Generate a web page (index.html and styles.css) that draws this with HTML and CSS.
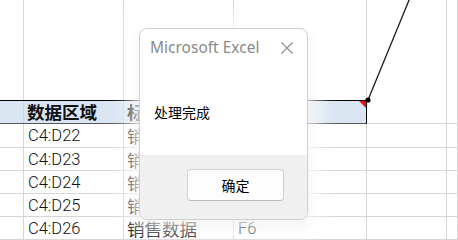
FILE: index.html
```html
<!DOCTYPE html>
<html lang="zh-CN">
<head>
    <meta charset="UTF-8">
    <title>Microsoft Excel</title>
    <link rel="stylesheet" href="styles.css">
</head>
<body>
    <div class="sheet">
        <!-- top area -->
        <div class="cell top"></div>
        <div class="cell top"></div>
        <div class="cell top"></div>
        <div class="cell top"></div>
        <div class="cell top"></div>
        <div class="cell top last"></div>

        <!-- header row -->
        <div class="cell head"></div>
        <div class="cell head"><span class="cjk bold">数据区域</span></div>
        <div class="cell head"><span class="cjk bold">标题</span></div>
        <div class="cell head"></div>
        <div class="cell"></div>
        <div class="cell last"></div>

        <div class="cell"></div><div class="cell">C4:D22</div><div class="cell"><span class="cjk">销售数据</span></div><div class="cell">F2</div><div class="cell"></div><div class="cell last"></div>
        <div class="cell"></div><div class="cell">C4:D23</div><div class="cell"><span class="cjk">销售数据</span></div><div class="cell">F3</div><div class="cell"></div><div class="cell last"></div>
        <div class="cell"></div><div class="cell">C4:D24</div><div class="cell"><span class="cjk">销售数据</span></div><div class="cell">F4</div><div class="cell"></div><div class="cell last"></div>
        <div class="cell"></div><div class="cell">C4:D25</div><div class="cell"><span class="cjk">销售数据</span></div><div class="cell">F5</div><div class="cell"></div><div class="cell last"></div>
        <div class="cell"></div><div class="cell">C4:D26</div><div class="cell"><span class="cjk">销售数据</span></div><div class="cell">F6</div><div class="cell"></div><div class="cell last"></div>
    </div>

    <!-- selection + comment marker -->
    <div class="selection"></div>
    <div class="comment-mark"></div>

    <!-- comment connector line -->
    <svg class="connector" width="458" height="240" viewBox="0 0 458 240">
        <line x1="368" y1="100" x2="409.5" y2="-1" stroke="#1a1a1a" stroke-width="1.3"/>
        <circle cx="368" cy="100" r="2.6" fill="#000"/>
    </svg>

    <!-- message box -->
    <div class="msgbox">
        <div class="msgbox-title">
            <span>Microsoft Excel</span>
            <svg class="close" width="12" height="12" viewBox="0 0 12 12">
                <path d="M0.5 0.5 L11.5 11.5 M11.5 0.5 L0.5 11.5" stroke="#8a8a8a" stroke-width="1.1" fill="none"/>
            </svg>
        </div>
        <div class="msgbox-body">处理完成</div>
        <div class="msgbox-footer">
            <button class="btn">确定</button>
        </div>
    </div>
</body>
</html>
```

FILE: styles.css
```css
/* Sheet */
body {
    margin: 0;
    width: 458px;
    height: 240px;
    overflow: hidden;
    background: #fff;
    font-family: 'Noto Sans CJK SC', sans-serif;
    color: #1a1a1a;
}

.sheet {
    display: grid;
    grid-template-columns: 24px 100px 110px 133px 80px 11px;
    grid-template-rows: 101px 23px 24px 23px 23px 23px 23px;
}

.cell {
    box-sizing: border-box;
    border-right: 1px solid #d6d6d6;
    border-bottom: 1px solid #d6d6d6;
    padding: 1px 0 0 4px;
    font-family: Roboto, 'Noto Sans CJK SC', sans-serif;
    font-weight: 300;
    font-size: 16.5px;
    line-height: 22px;
    color: #111;
    white-space: nowrap;
    overflow: hidden;
}

.cell.top {
    border-bottom: none;
}

.cell.head {
    background: #d9e5f1;
    padding-top: 0;
}

.cjk {
    font-family: 'Noto Sans CJK SC', sans-serif;
    font-weight: 400;
    font-size: 17.5px;
    line-height: 22px;
    margin-left: -1px;
}

.bold {
    font-weight: bold;
}

/* Overlays */
.selection {
    position: absolute;
    left: -2px;
    top: 100px;
    width: 367px;
    height: 22px;
    border: 1px solid #000;
    border-bottom-color: #555;
}

.comment-mark {
    position: absolute;
    left: 359px;
    top: 101px;
    width: 0;
    height: 0;
    border-top: 7px solid #e8101a;
    border-left: 7px solid transparent;
}

.connector {
    position: absolute;
    left: 0;
    top: 0;
}

/* Message box */
.msgbox {
    position: absolute;
    left: 139px;
    top: 28px;
    width: 169px;
    height: 192px;
    box-sizing: border-box;
    border: 1px solid #cfcfcf;
    border-radius: 8px;
    background: #fff;
    overflow: hidden;
    display: flex;
    flex-direction: column;
    box-shadow: 0 0 22px 10px rgba(255, 255, 255, 0.85), 0 5px 12px rgba(0, 0, 0, 0.14);
}

.msgbox-title {
    display: flex;
    justify-content: space-between;
    align-items: center;
    height: 36px;
    padding: 0 14px 0 10px;
    font-family: 'Noto Sans', sans-serif;
    font-size: 15.5px;
    color: #8a8a8a;
}

.msgbox-title .close {
    margin-top: 1px;
}

.msgbox-body {
    flex: 1;
    padding: 39px 0 0 14px;
    font-size: 14px;
    line-height: 16px;
    color: #000;
}

.msgbox-footer {
    height: 64px;
    background: #f0f0f0;
    display: flex;
    justify-content: flex-end;
    align-items: flex-start;
    padding: 14px 23px 0 0;
    box-sizing: border-box;
}

.btn {
    width: 97px;
    height: 32px;
    background: #fdfdfd;
    border: 1px solid #d0d0d0;
    border-bottom-color: #bcbcbc;
    border-radius: 4px;
    font-family: 'Noto Sans CJK SC', sans-serif;
    font-size: 14px;
    color: #000;
    padding: 0;
}
```
